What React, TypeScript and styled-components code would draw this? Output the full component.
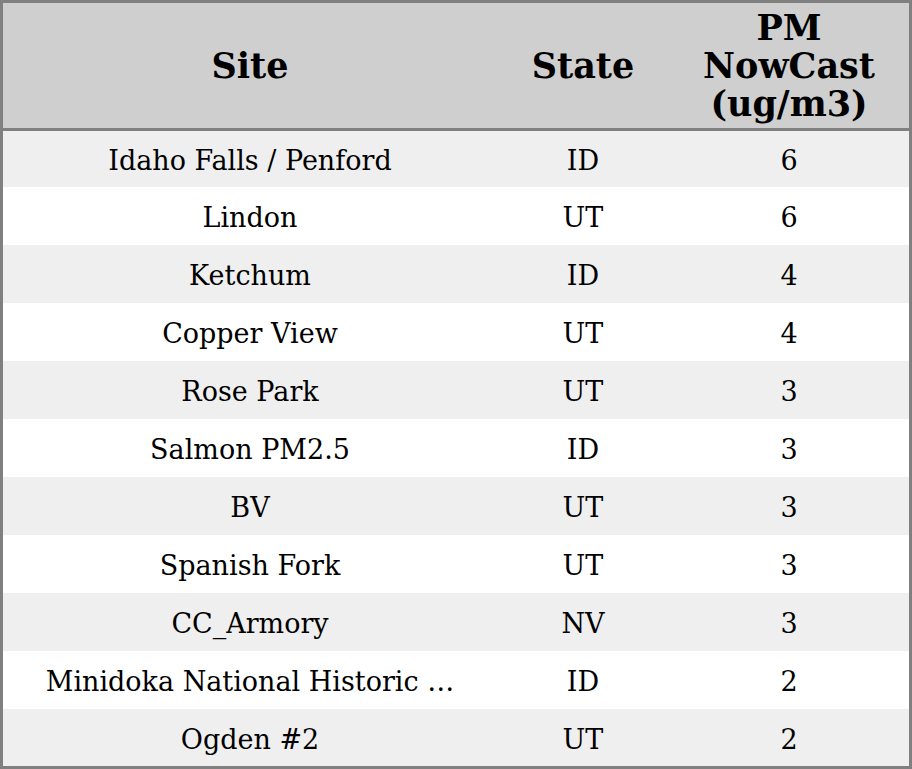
import styled, { createGlobalStyle } from "styled-components";

const GlobalStyle = createGlobalStyle`
  html, body {
    margin: 0;
    padding: 0;
    background: #ffffff;
  }
`;

const Table = styled.table`
  width: 912px;
  border-collapse: separate;
  border-spacing: 0;
  border: 3px solid #808080;
  table-layout: fixed;
  font-family: "DejaVu Serif", "Liberation Serif", serif;
  color: #000000;
`;

const HeadCell = styled.th<{ $width: number }>`
  width: ${(p) => p.$width}px;
  height: 128px;
  padding: 0;
  background: #cfcfcf;
  border-bottom: 3px solid #808080;
  font-size: 35px;
  line-height: 38px;
  font-weight: bold;
  text-align: center;
  vertical-align: middle;
  box-sizing: border-box;
`;

const Row = styled.tr<{ $striped: boolean }>`
  height: 58px;
  background: ${(p) => (p.$striped ? "#efefef" : "#ffffff")};

  &:first-child {
    height: 56px;
  }

  &:last-child {
    height: 57px;
  }
`;

const Cell = styled.td`
  padding: 4px 0 0;
  font-size: 27px;
  line-height: 30px;
  text-align: center;
  vertical-align: middle;
  white-space: nowrap;
  overflow: hidden;
  box-sizing: border-box;
`;

const rows = [
  { site: "Idaho Falls / Penford", state: "ID", pm: 6 },
  { site: "Lindon", state: "UT", pm: 6 },
  { site: "Ketchum", state: "ID", pm: 4 },
  { site: "Copper View", state: "UT", pm: 4 },
  { site: "Rose Park", state: "UT", pm: 3 },
  { site: "Salmon PM2.5", state: "ID", pm: 3 },
  { site: "BV", state: "UT", pm: 3 },
  { site: "Spanish Fork", state: "UT", pm: 3 },
  { site: "CC_Armory", state: "NV", pm: 3 },
  { site: "Minidoka National Historic …", state: "ID", pm: 2 },
  { site: "Ogden #2", state: "UT", pm: 2 },
];

const App = () => {
  return (
    <>
      <GlobalStyle />
      <Table>
        <thead>
          <tr>
            <HeadCell $width={494}>Site</HeadCell>
            <HeadCell $width={172}>State</HeadCell>
            <HeadCell $width={240}>
              PM
              <br />
              NowCast
              <br />
              (ug/m3)
            </HeadCell>
          </tr>
        </thead>
        <tbody>
          {rows.map((r, i) => (
            <Row key={r.site} $striped={i % 2 === 0}>
              <Cell>{r.site}</Cell>
              <Cell>{r.state}</Cell>
              <Cell>{r.pm}</Cell>
            </Row>
          ))}
        </tbody>
      </Table>
    </>
  );
};

export default App;
